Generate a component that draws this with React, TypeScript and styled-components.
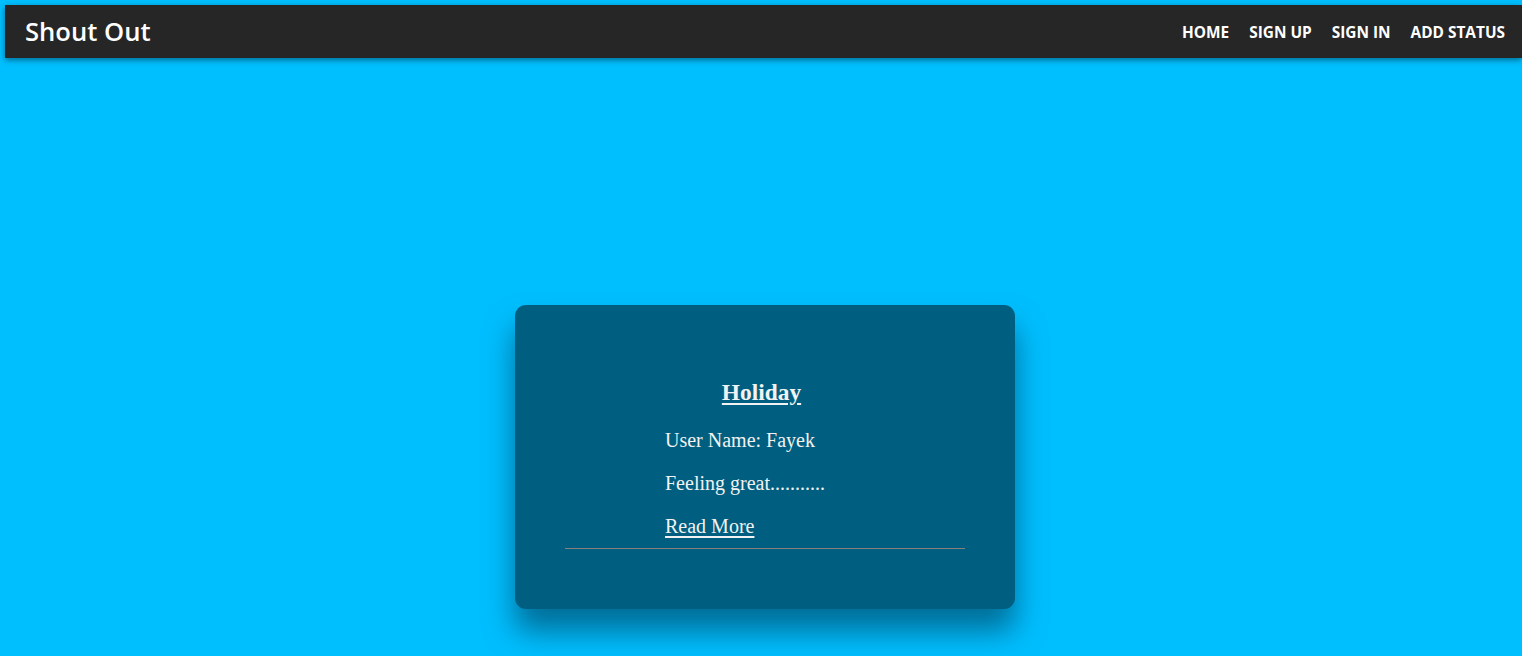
import React from "react";
import styled, { createGlobalStyle } from "styled-components";

const GlobalStyle = createGlobalStyle`
  html, body {
    margin: 0;
    padding: 0;
    background: #00bfff;
    overflow-x: hidden;
  }
  body {
    font-family: "Liberation Serif", "Times New Roman", serif;
    min-height: 656px;
  }
`;

const Page = styled.div`
  min-height: 656px;
  background: #00bfff;
  padding-top: 5px;
  box-sizing: border-box;
`;

const NavBar = styled.nav`
  margin-left: 5px;
  height: 53px;
  background: #262626;
  box-shadow: 0 2px 6px rgba(0, 0, 0, 0.45);
  display: flex;
  align-items: center;
  justify-content: space-between;
  padding: 2px 17px 0 20px;
  box-sizing: border-box;
`;

const Brand = styled.div`
  font-family: "Open Sans", "Noto Sans", sans-serif;
  font-weight: 600;
  font-size: 25.6px;
  color: #ffffff;
  margin-top: -2px;
`;

const NavLinks = styled.ul`
  list-style: none;
  margin: 0;
  padding: 0;
  display: flex;
  gap: 20px;
`;

const NavLink = styled.li`
  font-family: "Open Sans", "Noto Sans", sans-serif;
  font-weight: 700;
  font-size: 15.4px;
  color: #ffffff;
  text-transform: uppercase;
`;

const Main = styled.main`
  display: flex;
  justify-content: center;
  padding-left: 8px;
  padding-top: 247px;
`;

const Card = styled.article`
  width: 500px;
  box-sizing: border-box;
  background: #005f80;
  border-radius: 11px;
  padding: 74px 50px 60px;
  box-shadow: 0 22px 30px rgba(0, 30, 50, 0.5);
  color: #f2f2f2;
`;

const Title = styled.h3`
  margin: 0;
  padding-right: 7px;
  text-align: center;
  font-size: 23.4px;
  line-height: 27px;
  font-weight: 700;
  text-decoration: underline;
  text-underline-offset: 3px;
`;

const Info = styled.div`
  padding-left: 100px;
`;

const Line = styled.p`
  margin: 20px 0 0;
  font-size: 20px;
  line-height: 23px;
  &:first-child {
    margin-top: 23px;
  }
`;

const ReadMore = styled.a`
  color: #f2f2f2;
  text-decoration: underline;
  text-underline-offset: 3px;
  cursor: pointer;
`;

const Divider = styled.hr`
  margin: 10px 0 0;
  border: none;
  height: 1px;
  background: #8a7f7a;
`;

export default function App() {
  return (
    <>
      <GlobalStyle />
      <Page>
        <NavBar>
          <Brand>Shout Out</Brand>
          <NavLinks>
            <NavLink>Home</NavLink>
            <NavLink>Sign Up</NavLink>
            <NavLink>Sign In</NavLink>
            <NavLink>Add Status</NavLink>
          </NavLinks>
        </NavBar>
        <Main>
          <Card>
            <Title>Holiday</Title>
            <Info>
              <Line>User Name: Fayek</Line>
              <Line>Feeling great...........</Line>
              <Line>
                <ReadMore>Read More</ReadMore>
              </Line>
            </Info>
            <Divider />
          </Card>
        </Main>
      </Page>
    </>
  );
}
